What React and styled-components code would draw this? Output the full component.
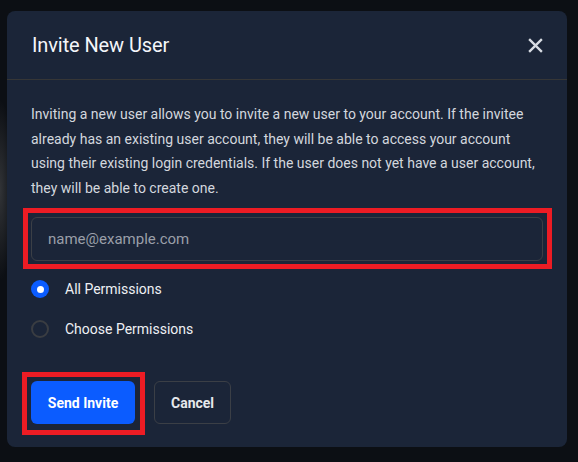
import React, { useState } from "react";
import styled, { createGlobalStyle } from "styled-components";

const GlobalStyle = createGlobalStyle`
  html, body {
    margin: 0;
    padding: 0;
    background: #0c0f14;
  }
  body {
    font-family: Roboto, "Noto Sans", Arial, sans-serif;
    -webkit-font-smoothing: antialiased;
  }
  * { box-sizing: border-box; }
`;

const Backdrop = styled.div`
  width: 578px;
  height: 462px;
  padding: 11px 11px 0 7px;
  background:
    radial-gradient(ellipse 14px 90px at 0px 190px, rgba(120,120,120,0.35), rgba(0,0,0,0) 100%),
    #0c0f14;
`;

const Modal = styled.div`
  width: 560px;
  height: 436px;
  background: #1b2538;
  border-radius: 8px;
  display: flex;
  flex-direction: column;
`;

const Header = styled.div`
  display: flex;
  align-items: center;
  justify-content: space-between;
  height: 69px;
  padding: 0 20px 0 25px;
  border-bottom: 1px solid #363636;
`;

const Title = styled.h2`
  margin: 0;
  font-size: 20px;
  font-weight: 400;
  color: #f4f6fa;
  letter-spacing: -0.1px;
`;

const CloseButton = styled.button`
  background: none;
  border: 0;
  padding: 0;
  width: 24px;
  height: 24px;
  display: flex;
  align-items: center;
  justify-content: center;
  color: #d8dce3;
  cursor: pointer;
`;

const Body = styled.div`
  padding: 22px 24px 0 24px;
  display: flex;
  flex-direction: column;
`;

const Description = styled.p`
  margin: 0;
  font-size: 14px;
  line-height: 24.5px;
  color: #d3d7de;
`;

/* annotation overlay: a square red frame drawn over the highlighted control */
const Highlight = styled.div`
  position: relative;
  display: ${(p) => (p.$inline ? "inline-flex" : "flex")};
  margin-top: ${(p) => p.$mt || "0px"};
  &::after {
    content: "";
    position: absolute;
    top: -9px;
    left: ${(p) => (p.$inline ? "-9px" : "-8px")};
    right: ${(p) => (p.$inline ? "-10px" : "-9px")};
    bottom: ${(p) => (p.$inline ? "-11px" : "-8px")};
    border: 5px solid #ed1c24;
    pointer-events: none;
  }
`;

const Input = styled.input`
  width: 512px;
  height: 44px;
  border: 1px solid #3b3f46;
  border-radius: 6px;
  background: transparent;
  padding: 0 16px;
  font-family: Roboto, Arial, sans-serif;
  font-size: 15px;
  color: #e6e8ec;
  outline: none;
  &::placeholder { color: #9a9fa8; }
`;

const RadioGroup = styled.div`
  margin-top: 18px;
  display: flex;
  flex-direction: column;
  gap: 20px;
`;

const RadioRow = styled.label`
  display: flex;
  align-items: center;
  gap: 16px;
  height: 20px;
  font-size: 14px;
  color: #eef0f4;
  cursor: pointer;
`;

const RadioDot = styled.span`
  width: 18px;
  height: 18px;
  border-radius: 50%;
  flex: none;
  display: flex;
  align-items: center;
  justify-content: center;
  background: ${(p) => (p.$checked ? "#0b5cff" : "transparent")};
  border: ${(p) => (p.$checked ? "none" : "2px solid #3a3d42")};
  &::after {
    content: "";
    width: 7px;
    height: 7px;
    border-radius: 50%;
    background: #ffffff;
    display: ${(p) => (p.$checked ? "block" : "none")};
  }
`;

const Footer = styled.div`
  margin-top: auto;
  padding: 0 24px 23px 24px;
  display: flex;
  align-items: center;
  gap: 19px;
`;

const Button = styled.button`
  height: 43px;
  padding: 0 16px;
  border-radius: 6px;
  font-family: Roboto, Arial, sans-serif;
  font-size: 14px;
  font-weight: 700;
  cursor: pointer;
  color: ${(p) => (p.$primary ? "#ffffff" : "#e6e8ec")};
  background: ${(p) => (p.$primary ? "#0b5cff" : "transparent")};
  border: ${(p) => (p.$primary ? "none" : "1px solid #3b3f46")};
  width: ${(p) => (p.$primary ? "104px" : "77px")};
`;

export default function App() {
  const [perm, setPerm] = useState("all");
  return (
    <>
      <GlobalStyle />
      <Backdrop>
        <Modal>
          <Header>
            <Title>Invite New User</Title>
            <CloseButton aria-label="Close">
              <svg width="17" height="17" viewBox="0 0 16 16">
                <path d="M2 2 L14 14 M14 2 L2 14" stroke="currentColor" strokeWidth="2.2" strokeLinecap="butt" />
              </svg>
            </CloseButton>
          </Header>
          <Body>
            <Description>
              Inviting a new user allows you to invite a new user to your account. If the invitee
              already has an existing user account, they will be able to access your account
              using their existing login credentials. If the user does not yet have a user account,
              they will be able to create one.
            </Description>
            <Highlight $mt="17px">
              <Input placeholder="name@example.com" />
            </Highlight>
            <RadioGroup>
              <RadioRow onClick={() => setPerm("all")}>
                <RadioDot $checked={perm === "all"} />
                All Permissions
              </RadioRow>
              <RadioRow onClick={() => setPerm("choose")}>
                <RadioDot $checked={perm === "choose"} />
                Choose Permissions
              </RadioRow>
            </RadioGroup>
          </Body>
          <Footer>
            <Highlight $inline>
              <Button $primary>Send Invite</Button>
            </Highlight>
            <Button>Cancel</Button>
          </Footer>
        </Modal>
      </Backdrop>
    </>
  );
}
